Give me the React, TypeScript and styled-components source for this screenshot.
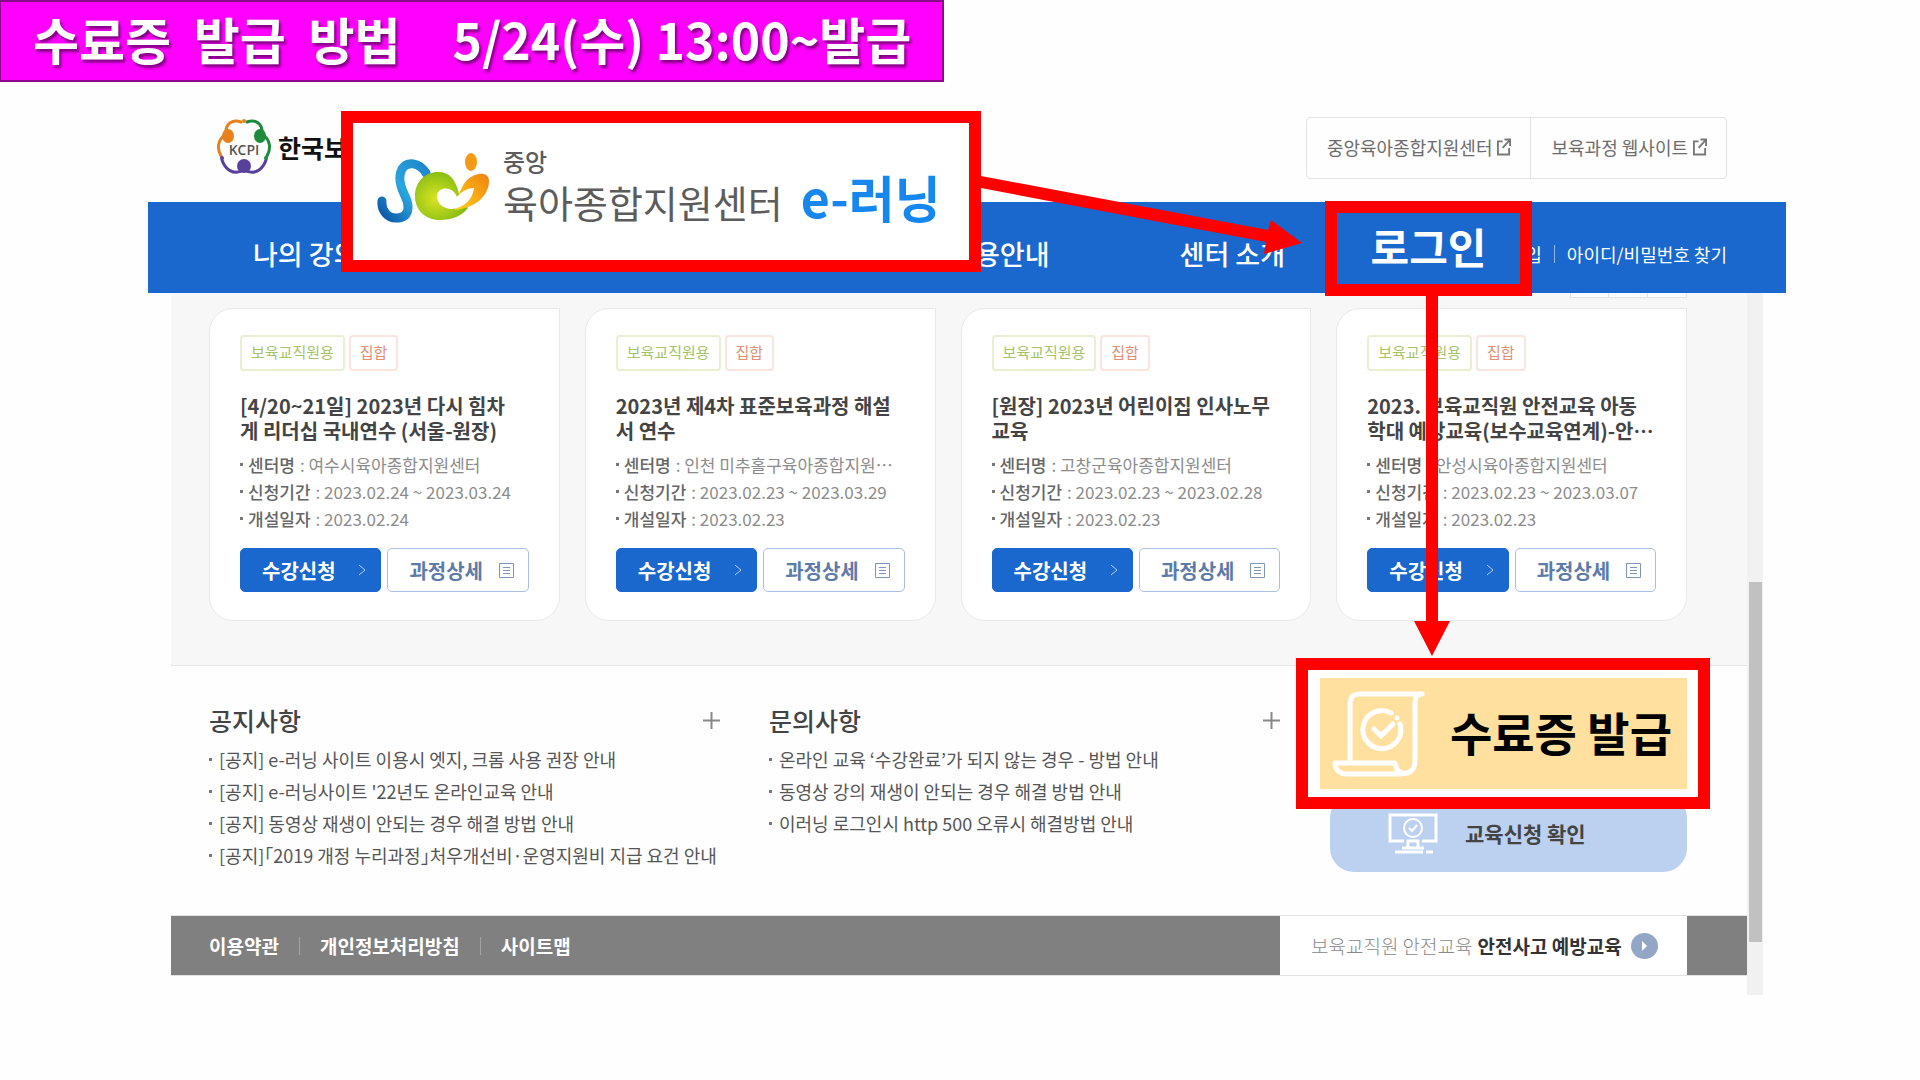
import React from "react";
import styled, { createGlobalStyle, css } from "styled-components";

const RED = "#ff0000";
const BLUE = "#1a68cd";

const GlobalStyle = createGlobalStyle`
  * { box-sizing: border-box; }
  body { margin: 0; background: #fefefe; font-family: "Noto Sans CJK KR", sans-serif; color: #444; }
  h1, h2, h3, p, ul, dl, dd, dt { margin: 0; padding: 0; font-weight: inherit; font-size: inherit; }
  ul { list-style: none; }
  a { color: inherit; text-decoration: none; }
  button { font-family: inherit; margin: 0; cursor: pointer; }
  svg { display: block; flex: none; }
`;

const Slide = styled.div`
  position: relative;
  min-width: 1880px;
`;

const Banner = styled.h1`
  display: inline-flex;
  align-items: center;
  gap: 52px;
  height: 82px;
  padding: 0 31px 6px 32px;
  background: #ff00ff;
  border: 2px solid #8b0a8b;
  border-left-width: 1px;
  color: #fff;
  font-size: 50px;
  font-weight: 700;
  line-height: 1;
  text-shadow: 2px 3px 3px rgba(60, 0, 60, 0.65);
  white-space: pre;
`;

const SiteHeader = styled.header`
  position: relative;
  margin: 0 134px 0 148px;
`;

const TopRow = styled.div`
  display: flex;
  align-items: center;
  justify-content: space-between;
  height: 120px;
  padding: 11px 59px 0 68px;
`;

const Brand = styled.a`
  display: flex;
  align-items: center;
  gap: 6px;
  padding-bottom: 2px;
  color: #111;
  font-size: 25px;
  font-weight: 700;
`;

const SiteLinks = styled.div`
  display: flex;
  border: 1px solid #e3e3e3;
  border-radius: 4px;
`;

const SiteLink = styled.a`
  display: flex;
  align-items: center;
  gap: 5px;
  height: 60px;
  padding: 0 19px 2px 20px;
  color: #6c6c6c;
  font-size: 18px;
  & + & { border-left: 1px solid #e3e3e3; }
`;

const NavBar = styled.nav`
  display: flex;
  align-items: center;
  height: 91px;
  padding: 12px 59px 0 105px;
  background: ${BLUE};
  color: #fff;
`;

const NavLink = styled.a<{ $push?: boolean }>`
  margin-right: ${(p) => (p.$push ? "auto" : "130px")};
  font-size: 27px;
  font-weight: 500;
`;

const Account = styled.div`
  display: flex;
  align-items: center;
  gap: 12px;
  width: 312px;
  justify-content: flex-end;
  font-size: 18px;
`;

const Bar = styled.span<{ $color: string }>`
  width: 1px;
  height: 18px;
  background: ${(p) => p.$color};
`;

const Viewport = styled.div`
  display: flex;
  height: 702px;
  margin: 0 157px 0 171px;
`;

const Page = styled.main`
  flex: 1;
  min-width: 0;
`;

const ScrollTrack = styled.div`
  flex: none;
  width: 16px;
  padding: 289px 1px 0 2px;
  background: #f1f1f1;
`;

const ScrollThumb = styled.div`
  height: 360px;
  background: #c1c1c1;
`;

const Courses = styled.section`
  height: 373px;
  padding: 0 60px 0 38px;
  background: #f7f7f7;
  border-bottom: 1px solid #e6e6e6;
`;

const Pager = styled.div`
  display: flex;
  justify-content: flex-end;
  height: 15px;
`;

const PagerCell = styled.span`
  width: 39px;
  height: 5px;
  background: #fff;
  border: 1px solid #e3e3e3;
  border-top: 0;
  & + & { border-left: 0; }
`;

const CardGrid = styled.div`
  display: grid;
  grid-template-columns: repeat(4, 1fr);
  gap: 25px;
`;

const Card = styled.article`
  min-width: 0;
  height: 313px;
  padding: 26px 30px;
  background: #fff;
  border: 1px solid #e9e9e9;
  border-radius: 24px 0 24px 24px;
`;

const Tags = styled.div`
  display: flex;
  gap: 4px;
`;

const Tag = styled.span<{ $tone: "green" | "orange" }>`
  height: 36px;
  padding: 0 9px;
  border: 2px solid ${(p) => (p.$tone === "green" ? "#e9f0d2" : "#fae5de")};
  border-radius: 4px;
  color: ${(p) => (p.$tone === "green" ? "#a3c46b" : "#e28e74")};
  font-size: 15px;
  line-height: 30px;
`;

const CourseTitle = styled.h2`
  height: 50px;
  margin: 22px 0 8px;
  color: #444;
  font-size: 20px;
  font-weight: 700;
  line-height: 25px;
  white-space: nowrap;
`;

const Facts = styled.dl`
  color: #8c8c8c;
  font-size: 17px;
  line-height: 27px;
`;

const Fact = styled.div`
  display: flex;
  align-items: center;
  white-space: nowrap;
  &::before { content: ""; width: 3px; height: 3px; margin-right: 5px; background: #777; }
  dt { margin-right: 5px; color: #666; font-weight: 500; }
  dd { font-weight: 400; }
`;

const Actions = styled.div`
  display: grid;
  grid-template-columns: 1fr 1fr;
  gap: 6px;
  margin-top: 16px;
`;

const Action = styled.button<{ $primary?: boolean }>`
  display: flex;
  align-items: center;
  justify-content: space-between;
  height: 44px;
  padding: 0 14px 0 21px;
  border: 1px solid #a9bfdf;
  border-radius: 5px;
  background: #fff;
  color: #5d7ba8;
  font-size: 20px;
  font-weight: 700;
  ${(p) =>
    p.$primary &&
    css`
      background: ${BLUE};
      border-color: ${BLUE};
      color: #fff;
    `}
`;

const Boards = styled.section`
  display: flex;
  height: 249px;
  padding: 35px 60px 0 38px;
`;

const Board = styled.div`
  width: 511px;
  margin-right: 49px;
`;

const BoardHead = styled.div`
  display: flex;
  align-items: center;
  justify-content: space-between;
  height: 38px;
  color: #444;
  h2 { font-size: 25px; font-weight: 500; line-height: 36px; }
`;

const MoreButton = styled.button`
  padding: 0;
  border: 0;
  background: none;
`;

const BoardList = styled.ul`
  margin-top: 4px;
  color: #555;
  font-size: 18px;
  line-height: 32px;
  font-feature-settings: "halt";
  white-space: nowrap;
`;

const BoardItem = styled.li`
  display: flex;
  align-items: center;
  gap: 7px;
  &::before { content: ""; width: 3px; height: 3px; background: #777; }
`;

const Shortcuts = styled.div`
  position: relative;
  flex: 1;
  padding-top: 93px;
  margin-left: 1px;
`;

const CheckLink = styled.a`
  display: flex;
  align-items: center;
  gap: 27px;
  height: 78px;
  padding-left: 58px;
  background: #bbd1ef;
  border-radius: 24px;
  color: #444;
  font-size: 21px;
  font-weight: 700;
`;

const Footer = styled.footer`
  display: flex;
  align-items: center;
  height: 61px;
  padding: 0 60px 0 38px;
  background: #808080;
  border: solid #e2e2e2;
  border-width: 1px 0;
`;

const FooterNav = styled.div`
  display: flex;
  align-items: center;
  gap: 20px;
  flex: 1;
  color: #fff;
  font-size: 19px;
  font-weight: 700;
`;

const Related = styled.a`
  display: flex;
  align-items: center;
  gap: 5px;
  width: 407px;
  height: 59px;
  padding-left: 31px;
  background: #fff;
  color: #888;
  font-size: 19px;
  font-weight: 300;
  strong { color: #333; font-weight: 700; }
  svg { margin-left: 4px; }
`;

const callout = css`
  position: absolute;
  z-index: 2;
  display: flex;
  align-items: center;
  border: 12px solid ${RED};
`;

const LogoCallout = styled.div`
  ${callout}
  left: 193px;
  top: 29px;
  width: 640px;
  height: 161px;
  gap: 12px;
  padding: 0 0 6px 24px;
  background: #fff;
`;

const LogoName = styled.div`
  padding-bottom: 10px;
  color: #5c5c5c;
  font-size: 38px;
  line-height: 46px;
  small { display: block; font-size: 24px; font-weight: 500; line-height: 36px; }
`;

const LogoProduct = styled.strong`
  margin: 14px 0 0 6px;
  color: #1687ee;
  font-size: 50px;
  font-weight: 700;
  line-height: 56px;
`;

const LoginCallout = styled.a`
  ${callout}
  right: 254px;
  top: 119px;
  width: 207px;
  height: 95px;
  justify-content: center;
  padding-bottom: 6px;
  background: ${BLUE};
  color: #fff;
  font-size: 42px;
  font-weight: 700;
  line-height: 1;
`;

const CertCallout = styled.a`
  ${callout}
  right: -23px;
  top: -43px;
  width: 414px;
  height: 151px;
  padding: 8px 11px 8px 12px;
  background: #fff;
`;

const CertFace = styled.span`
  display: flex;
  align-items: center;
  justify-content: space-between;
  flex: 1;
  height: 111px;
  padding: 0 15px 0 12px;
  background: #ffe09f;
  color: #000;
  font-size: 46px;
  font-weight: 700;
  line-height: 1;
`;

const CertLabel = styled.span`
  padding-bottom: 6px;
`;

const Arrows = styled.svg`
  position: absolute;
  z-index: 3;
  left: 0;
  top: 0;
  pointer-events: none;
`;

const KcpiMark = () => (
  <svg width="56" height="58" viewBox="0 0 56 58" fill="none" strokeLinecap="round">
    <path d="M25 4C17 1 9 5 10 16C1 22 1 31 5 38" stroke="#e8811c" strokeWidth="3" />
    <path d="M31 4c8-3 16 1 15 12c9 6 9 15 5 22" stroke="#1d8a3c" strokeWidth="3" />
    <path d="M6 42c3 9 11 16 22 10c11 6 19-1 22-10" stroke="#57419a" strokeWidth="3" />
    <ellipse cx="12" cy="18" rx="6" ry="7" fill="#e8811c" />
    <ellipse cx="44" cy="18" rx="6" ry="7" fill="#1d8a3c" />
    <ellipse cx="28" cy="48" rx="7" ry="7" fill="#57419a" />
    <circle cx="28" cy="3" r="2" fill="#e8811c" />
    <circle cx="6" cy="40" r="2" fill="#57419a" />
    <circle cx="50" cy="40" r="2" fill="#1d8a3c" />
    <text x="28" y="37" textAnchor="middle" fontFamily="Open Sans, sans-serif" fontSize="14" fontWeight="600" fill="#555">KCPI</text>
  </svg>
);

const CenterMark = () => (
  <svg width="114" height="72" viewBox="0 0 114 72" fill="none">
    <defs>
      <linearGradient id="s" x1="0" y1="1" x2="1" y2="0"><stop stopColor="#0b55a6" /><stop offset=".5" stopColor="#2ba6de" /><stop offset="1" stopColor="#1c86cc" /></linearGradient>
      <radialGradient id="g" cx=".4" cy=".55" r=".6"><stop stopColor="#d9e421" /><stop offset="1" stopColor="#83bb14" /></radialGradient>
      <linearGradient id="o" x1="0" y1="1" x2="1" y2="0"><stop stopColor="#ffd21c" /><stop offset="1" stopColor="#f08010" /></linearGradient>
    </defs>
    <path d="M5 48c-1 10 6 17 14 17c14 0 14-12 9-22c-6-12-7-20-3-27c5-8 17-7 24 4" stroke="url(#s)" strokeWidth="9" strokeLinecap="round" />
    <path d="M61 19c12 0 18 8 21 22l9 14c-6 8-16 12-28 12c-15 0-25-10-25-24c0-14 10-24 23-24z" fill="url(#g)" />
    <path d="M112 28C112 17 97 20 90 27C85 32 84 38 80 44L78 57C98 55 112 43 112 28z" fill="url(#o)" />
    <path d="M80 44C76 33 61 33 60 43C60 51 67 56 75 56C87 55 96 46 97 35C90 35 84 39 80 44z" fill="#fff" />
    <ellipse cx="94" cy="9" rx="6" ry="9" fill="#f59a18" />
  </svg>
);

const CertIcon = () => (
  <svg width="94" height="86" viewBox="0 0 94 86" fill="none" stroke="#fff" strokeWidth="5" strokeLinejoin="round" strokeLinecap="round">
    <path d="M18 72V13c0-6 3-10 9-10h63c-6 0-7 4-7 10v57c0 16-19 16-20 2H3c0 7 5 11 12 11h55" />
    <path d="M59 22a19 19 0 1 0 9 11" />
    <path d="M42 38l7 7l12-12" />
    <circle cx="65" cy="27" r="1" strokeWidth="3" />
  </svg>
);

const MonitorIcon = () => (
  <svg width="50" height="41" viewBox="0 0 50 41" fill="none" stroke="#fff" strokeWidth="3">
    <path d="M16 28H2V2h46v26H34M20 27v7M30 27v7M19 28h12M14 35h22M7 39h28M38 39h7" />
    <circle cx="25" cy="15" r="9" strokeWidth="2" />
    <path d="M21 15l3 3l5-6" strokeWidth="2" />
  </svg>
);

const ExternalIcon = () => (
  <svg width="14" height="18" viewBox="0 0 15 18" fill="none" stroke="#777" strokeWidth="2">
    <path d="M6 3H1v14h12v-7M8 1h6v7M14 1L6 10" />
  </svg>
);

const ChevronIcon = () => (
  <svg width="8" height="12" viewBox="0 0 8 12" fill="none" stroke="#b9d0f0">
    <path d="M1 1l6 5l-6 5" />
  </svg>
);

const DocIcon = () => (
  <svg width="15" height="15" viewBox="0 0 15 15" fill="none" stroke="#7d95b8">
    <path d="M.5 .5h14v14H.5zM4 4.500h7M4 7.500h7M4 10.500h7" />
  </svg>
);

const PlusIcon = () => (
  <svg width="17" height="17" viewBox="0 0 17 17" stroke="#888" strokeWidth="2">
    <path d="M8.500 0v17M0 8.500h17" />
  </svg>
);

const PlayIcon = () => (
  <svg width="27" height="26" viewBox="0 0 27 26">
    <ellipse cx="13.500" cy="13" rx="13.500" ry="13" fill="#93a6c6" />
    <path d="M11 8l5 5l-5 5z" fill="#fff" />
  </svg>
);

const courses = [
  { title: ["[4/20~21일] 2023년 다시 힘차", "게 리더십 국내연수 (서울-원장)"], center: "여수시육아종합지원센터", period: "2023.02.24 ~ 2023.03.24", opened: "2023.02.24" },
  { title: ["2023년 제4차 표준보육과정 해설", "서 연수"], center: "인천 미추홀구육아종합지원⋯", period: "2023.02.23 ~ 2023.03.29", opened: "2023.02.23" },
  { title: ["[원장] 2023년 어린이집 인사노무", "교육"], center: "고창군육아종합지원센터", period: "2023.02.23 ~ 2023.02.28", opened: "2023.02.23" },
  { title: ["2023. 보육교직원 안전교육 아동", "학대 예방교육(보수교육연계)-안⋯"], center: "안성시육아종합지원센터", period: "2023.02.23 ~ 2023.03.07", opened: "2023.02.23" },
];

const boards = [
  {
    name: "공지사항",
    items: [
      "[공지] e-러닝 사이트 이용시 엣지, 크롬 사용 권장 안내",
      "[공지] e-러닝사이트 '22년도 온라인교육 안내",
      "[공지] 동영상 재생이 안되는 경우 해결 방법 안내",
      "[공지]「2019 개정 누리과정」처우개선비·운영지원비 지급 요건 안내",
    ],
  },
  {
    name: "문의사항",
    items: [
      "온라인 교육 ‘수강완료’가 되지 않는 경우 - 방법 안내",
      "동영상 강의 재생이 안되는 경우 해결 방법 안내",
      "이러닝 로그인시 http 500 오류시 해결방법 안내",
    ],
  },
];

export default function App() {
  return (
    <Slide>
      <GlobalStyle />
      <Banner>
        <span>수료증  발급  방법</span>
        <span>5/24(수) 13:00~발급</span>
      </Banner>
      <SiteHeader>
        <TopRow>
          <Brand href="#"><KcpiMark />한국보</Brand>
          <SiteLinks>
            <SiteLink href="#">중앙육아종합지원센터<ExternalIcon /></SiteLink>
            <SiteLink href="#">보육과정 웹사이트<ExternalIcon /></SiteLink>
          </SiteLinks>
        </TopRow>
        <NavBar>
          <NavLink href="#" $push>나의 강의</NavLink>
          <NavLink href="#">이용안내</NavLink>
          <NavLink href="#">센터 소개</NavLink>
          <Account>
            <a href="#">가입</a>
            <Bar $color="#8fb4e6" />
            <a href="#">아이디/비밀번호 찾기</a>
          </Account>
        </NavBar>
        <LogoCallout>
          <CenterMark />
          <LogoName><small>중앙</small>육아종합지원센터</LogoName>
          <LogoProduct>e-러닝</LogoProduct>
        </LogoCallout>
        <LoginCallout href="#">로그인</LoginCallout>
      </SiteHeader>
      <Viewport>
        <Page>
          <Courses>
            <Pager><PagerCell /><PagerCell /><PagerCell /></Pager>
            <CardGrid>
              {courses.map((c) => (
                <Card key={c.title[0]}>
                  <Tags><Tag $tone="green">보육교직원용</Tag><Tag $tone="orange">집합</Tag></Tags>
                  <CourseTitle>{c.title[0]}<br />{c.title[1]}</CourseTitle>
                  <Facts>
                    <Fact><dt>센터명</dt><dd>: {c.center}</dd></Fact>
                    <Fact><dt>신청기간</dt><dd>: {c.period}</dd></Fact>
                    <Fact><dt>개설일자</dt><dd>: {c.opened}</dd></Fact>
                  </Facts>
                  <Actions>
                    <Action $primary>수강신청<ChevronIcon /></Action>
                    <Action>과정상세<DocIcon /></Action>
                  </Actions>
                </Card>
              ))}
            </CardGrid>
          </Courses>
          <Boards>
            {boards.map((b) => (
              <Board key={b.name}>
                <BoardHead><h2>{b.name}</h2><MoreButton aria-label={b.name}><PlusIcon /></MoreButton></BoardHead>
                <BoardList>{b.items.map((t) => <BoardItem key={t}><a href="#">{t}</a></BoardItem>)}</BoardList>
              </Board>
            ))}
            <Shortcuts>
              <CheckLink href="#"><MonitorIcon />교육신청 확인</CheckLink>
              <CertCallout href="#"><CertFace><CertIcon /><CertLabel>수료증 발급</CertLabel></CertFace></CertCallout>
            </Shortcuts>
          </Boards>
          <Footer>
            <FooterNav>
              <a href="#">이용약관</a><Bar $color="#a2a2a2" />
              <a href="#">개인정보처리방침</a><Bar $color="#a2a2a2" />
              <a href="#">사이트맵</a>
            </FooterNav>
            <Related href="#"><span>보육교직원 안전교육</span><strong>안전사고 예방교육</strong><PlayIcon /></Related>
          </Footer>
        </Page>
        <ScrollTrack><ScrollThumb /></ScrollTrack>
      </Viewport>
      <Arrows width="1920" height="700" viewBox="0 0 1920 700" fill={RED}>
        <path d="M981 176L1268 230L1271 220L1302 243L1264 254L1266 242L981 188z" />
        <path d="M1426 294H1438V621H1450L1432 656L1414 621H1426z" />
      </Arrows>
    </Slide>
  );
}
